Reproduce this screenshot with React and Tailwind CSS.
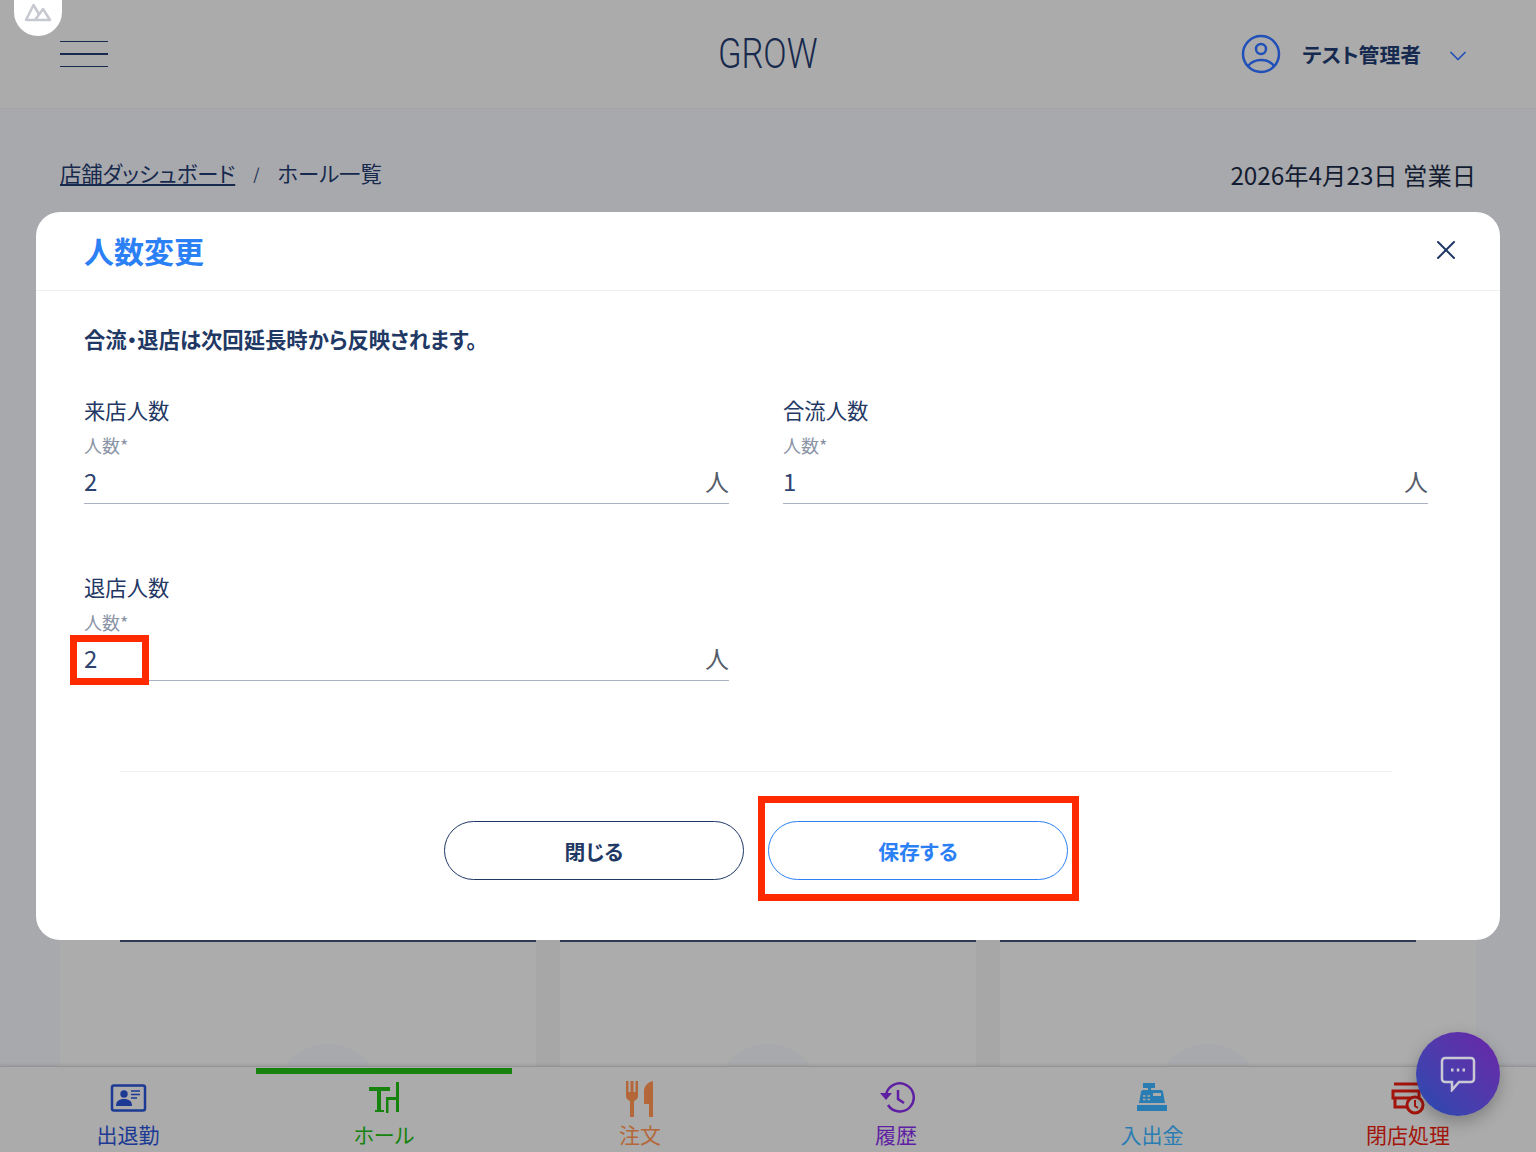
import { X, ChevronDown } from "lucide-react"

const navItems = [
  { label: "出退勤", color: "text-[#1c3a94]", icon: "card" },
  { label: "ホール", color: "text-[#16830f]", icon: "table", active: true },
  { label: "注文", color: "text-[#b4683a]", icon: "food" },
  { label: "履歴", color: "text-[#5f1fa3]", icon: "history" },
  { label: "入出金", color: "text-[#2a7db3]", icon: "register" },
  { label: "閉店処理", color: "text-[#a3150c]", icon: "close" },
]

const NavIcon = ({ name }) => {
  if (name === "card") {
    return (
      <svg width="38" height="42" viewBox="0 0 38 42" fill="none">
        <rect x="3" y="7.500" width="33" height="25" rx="2" stroke="currentColor" strokeWidth="2.500" />
        <circle cx="15" cy="16" r="3.700" fill="currentColor" />
        <path d="M7 28c0-5 3-7 8-7s8 2 8 7z" fill="currentColor" />
        <path d="M22 13h9M22 16.500h9M22 20h6" stroke="currentColor" strokeWidth="1.500" />
      </svg>
    )
  }
  if (name === "table") {
    return (
      <svg width="38" height="42" viewBox="0 0 38 42" fill="currentColor">
        <path d="M4 9h21v4h-9v19h3v2h-9v-2h2V13H4z" />
        <path d="M31 4h3v30h-3V22h-7.500v13H21V19h10z" />
      </svg>
    )
  }
  if (name === "food") {
    return (
      <svg width="38" height="42" viewBox="0 0 38 42" fill="currentColor">
        <path d="M5 3h2.500v11h2V3h3v11h2V3H17v15c0 3-2 4-4 5v16H9V23c-2-1-4-2-4-5z" />
        <path d="M32 3v36h-4V26h-5V13c0-5 4-9 9-10z" />
      </svg>
    )
  }
  if (name === "history") {
    return (
      <svg width="38" height="42" viewBox="0 0 38 42" fill="none" stroke="currentColor" strokeWidth="2.500">
        <path d="M9 17a14 14 0 1 1 2 10" />
        <path d="M3 15l6 7 6-7z" fill="currentColor" stroke="none" />
        <path d="M21 12v9l6 4" />
      </svg>
    )
  }
  if (name === "register") {
    return (
      <svg width="38" height="42" viewBox="0 0 38 42" fill="currentColor">
        <path d="M10 5h12v5h-4v2h10c1 0 2 1 2 2l2 11H6l2-11c0-1 1-2 2-2h5v-2h-5z" />
        <rect x="4" y="27" width="30" height="6" />
        <rect x="20" y="15" width="8" height="3" fill="#ababab" />
        <path d="M10 18h2.500M14.500 18H17M10 21.500h2.500M14.500 21.500H17" stroke="#ababab" strokeWidth="1.500" />
      </svg>
    )
  }
  return (
    <svg width="38" height="42" viewBox="0 0 38 42" fill="none" stroke="currentColor" strokeWidth="3">
      <path d="M5 6h26M4 13h26v7H4zM6 20v9h14" />
      <circle cx="26" cy="27" r="8" fill="#ababab" />
      <path d="M26 22v6l3 2" strokeWidth="2" />
    </svg>
  )
}

const Field = ({ title, value }) => (
  <div className="w-[645px]">
    <p className="text-[21.33px] leading-[28px] text-[#1f3864]">{title}</p>
    <p className="mt-[11px] text-[18px] leading-[20px] text-[#8a94a6]">人数*</p>
    <div className="flex h-[49px] items-center justify-between border-b-[1.5px] border-[#aab3c2] pt-[4px] text-[24px] text-[#2d4470]">
      <span>{value}</span>
      <span className="text-[#555d6b]">人</span>
    </div>
  </div>
)

const Card = () => (
  <div className="relative h-[126px] w-[416px] overflow-hidden border-t-2 border-[#2e3a52] bg-[#acacac]">
    <div className="absolute left-[156px] top-[102px] h-[104px] w-[104px] rounded-full bg-[#a8a9ac]" />
  </div>
)

export default function App() {
  return (
    <div className="relative h-[1152px] w-[1536px] overflow-hidden bg-[#a8a9ad] font-['Noto_Sans_CJK_JP',sans-serif] [font-feature-settings:'palt']">
      <header className="flex h-[109px] items-center justify-between border-b border-[#a3a3a3] bg-[#ababab] pl-[60px] pr-[64px]">
        <button className="flex w-[48px] flex-col gap-[11px]">
          <span className="h-[1.5px] bg-[#17294d]" />
          <span className="h-[1.5px] bg-[#17294d]" />
          <span className="h-[1.5px] bg-[#17294d]" />
        </button>
        <div className="flex items-center">
          <svg className="mr-[21px]" width="40" height="40" viewBox="0 0 40 40" fill="none" stroke="#2050b8" strokeWidth="2.500">
            <circle cx="20" cy="20" r="18" />
            <circle cx="20" cy="15" r="5" />
            <path d="M7 32c3-4 8-6 13-6s10 2 13 6" />
          </svg>
          <span className="pt-[2px] text-[20.8px] font-bold text-[#16294f]">テスト管理者</span>
          <ChevronDown className="ml-[23px] mt-[3px] text-[#2050b8]" size={28} strokeWidth={1.5} />
        </div>
      </header>

      <div className="flex h-[102px] items-start justify-between px-[60px] pt-[47px]">
        <div className="flex items-center text-[21.33px] leading-[34px] text-[#17294d]">
          <a className="underline underline-offset-2">店舗ダッシュボード</a>
          <span className="mx-[18px] text-[16px]">/</span>
          <span>ホール一覧</span>
        </div>
        <span className="pt-[2px] text-[24.3px] leading-[34px] text-[#131c30]">2026年4月23日 営業日</span>
      </div>

      <div className="mx-[60px] mt-[729px] bg-[#acacac] px-[60px]">
        <div className="flex gap-[24px] bg-[#a7a7a7]">
          <Card />
          <Card />
          <Card />
        </div>
      </div>

      <p className="absolute left-0 right-0 top-[27px] text-center font-['Roboto',sans-serif] text-[42px] font-light leading-[54px] text-[#17294d]">
        <span className="inline-block scale-x-[0.82]">GROW</span>
      </p>

      <div className="absolute left-[14px] top-[-20px] flex h-[56px] w-[48px] items-end justify-center rounded-b-[24px] bg-white pb-[14px]">
        <svg width="28" height="20" viewBox="0 0 28 20" fill="none" stroke="#c7c9d1" strokeWidth="2.500" strokeLinejoin="round">
          <path d="M11 18H2L9.500 3l6 10" />
          <path d="M11 18h15L19 7z" />
        </svg>
      </div>

      <div className="absolute left-[36px] top-[212px] h-[728px] w-[1464px] rounded-[24px] bg-white">
        <div className="flex h-[79px] items-center justify-between border-b border-[#eeeff2] pb-[2px] pl-[48px] pr-[38px]">
          <h2 className="text-[30px] font-bold text-[#2b80f5]">人数変更</h2>
          <X size={32} strokeWidth={1.5} className="text-[#1f3864]" />
        </div>
        <div className="px-[48px] pt-[32px]">
          <p className="text-[21.33px] font-bold leading-[32px] text-[#1f3864]">合流・退店は次回延長時から反映されます。</p>
          <div className="mt-[41px] flex gap-[54px]">
            <Field title="来店人数" value="2" />
            <Field title="合流人数" value="1" />
          </div>
          <div className="mt-[69px]">
            <Field title="退店人数" value="2" />
          </div>
        </div>
        <div className="ml-[84px] mr-[108px]">
          <div className="mt-[90px] border-t border-[#eeeff2]" />
          <div className="mt-[49px] flex justify-center gap-[24px]">
            <button className="h-[59px] w-[300px] rounded-full border border-[#1f3864] pt-[3px] text-[20.8px] font-bold text-[#1f3864]">閉じる</button>
            <button className="h-[59px] w-[300px] rounded-full border border-[#2b80f5] pt-[3px] text-[20.8px] font-bold text-[#2b80f5]">保存する</button>
          </div>
        </div>
      </div>

      <div className="absolute left-[70px] top-[635px] h-[50px] w-[79px] border-[7px] border-[#ff2a00]" />
      <div className="absolute left-[758px] top-[796px] h-[105px] w-[321px] border-[7px] border-[#ff2a00]" />

      <nav className="absolute bottom-0 left-0 grid h-[86px] w-[1536px] grid-cols-6 border-t border-[#949494] bg-[#ababab] shadow-[0_-1px_3px_rgba(0,0,0,0.1)]">
        {navItems.map((item) => (
          <div key={item.label} className={`relative flex flex-col items-center pt-[11px] ${item.color}`}>
            {item.active && <div className="absolute left-0 right-0 top-[1px] h-[6px] bg-[#16830f]" />}
            <NavIcon name={item.icon} />
            <span className="text-[21px] leading-[28px]">{item.label}</span>
          </div>
        ))}
      </nav>

      <div className="absolute left-[1416px] top-[1032px] flex h-[84px] w-[84px] items-center justify-center rounded-full bg-gradient-to-tr from-[#1f4ab0] to-[#6a22a8] shadow-[0_6px_16px_rgba(0,0,0,0.25)]">
        <svg width="36" height="36" viewBox="0 0 36 36" fill="none" stroke="#c9c9d6" strokeWidth="2.500">
          <path d="M5 2h26a3 3 0 0 1 3 3v18a3 3 0 0 1-3 3H19l-7 8v-8H5a3 3 0 0 1-3-3V5a3 3 0 0 1 3-3z" />
          <path d="M11 14h2.500M16.800 14h2.500M22.500 14h2.500" strokeWidth="3" />
        </svg>
      </div>
    </div>
  )
}
